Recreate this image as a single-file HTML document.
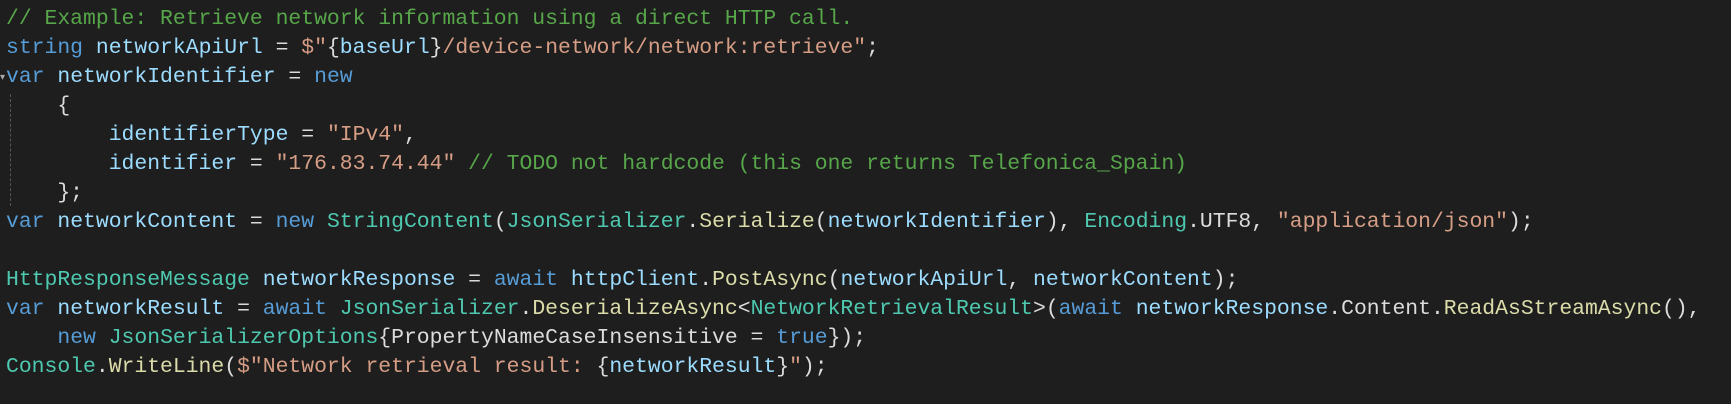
<!DOCTYPE html>
<html><head><meta charset="utf-8"><style>
html,body{margin:0;padding:0;background:#1e1e1e;width:1731px;height:404px;overflow:hidden}
pre{margin:0;position:absolute;left:6px;top:5px;font-family:"Liberation Mono",monospace;font-size:21.4px;line-height:29px;color:#dcdcdc;white-space:pre}
.c{color:#57a64a}.k{color:#569cd6}.v{color:#9cdcfe}.s{color:#d69d85}.t{color:#4ec9b0}.m{color:#dcdcaa}
.guide{position:absolute;left:10px;top:94px;height:112px;border-left:1px dashed #555}
.fold{position:absolute;left:0;top:72px;color:#aaa;font-size:10px;font-family:"DejaVu Sans",sans-serif}
</style></head><body>
<div class="guide"></div><div class="fold">▾</div>
<pre><span class="c">// Example: Retrieve network information using a direct HTTP call.</span>
<span class="k">string</span> <span class="v">networkApiUrl</span> = <span class="s">$"</span>{<span class="v">baseUrl</span>}<span class="s">/device-network/network:retrieve"</span>;
<span class="k">var</span> <span class="v">networkIdentifier</span> = <span class="k">new</span>
    {
        <span class="v">identifierType</span> = <span class="s">"IPv4"</span>,
        <span class="v">identifier</span> = <span class="s">"176.83.74.44"</span> <span class="c">// TODO not hardcode (this one returns Telefonica_Spain)</span>
    };
<span class="k">var</span> <span class="v">networkContent</span> = <span class="k">new</span> <span class="t">StringContent</span>(<span class="t">JsonSerializer</span>.<span class="m">Serialize</span>(<span class="v">networkIdentifier</span>), <span class="t">Encoding</span>.UTF8, <span class="s">"application/json"</span>);

<span class="t">HttpResponseMessage</span> <span class="v">networkResponse</span> = <span class="k">await</span> <span class="v">httpClient</span>.<span class="m">PostAsync</span>(<span class="v">networkApiUrl</span>, <span class="v">networkContent</span>);
<span class="k">var</span> <span class="v">networkResult</span> = <span class="k">await</span> <span class="t">JsonSerializer</span>.<span class="m">DeserializeAsync</span>&lt;<span class="t">NetworkRetrievalResult</span>&gt;(<span class="k">await</span> <span class="v">networkResponse</span>.Content.<span class="m">ReadAsStreamAsync</span>(),
    <span class="k">new</span> <span class="t">JsonSerializerOptions</span>{PropertyNameCaseInsensitive = <span class="k">true</span>});
<span class="t">Console</span>.<span class="m">WriteLine</span>(<span class="s">$"Network retrieval result: </span>{<span class="v">networkResult</span>}<span class="s">"</span>);</pre>
</body></html>
